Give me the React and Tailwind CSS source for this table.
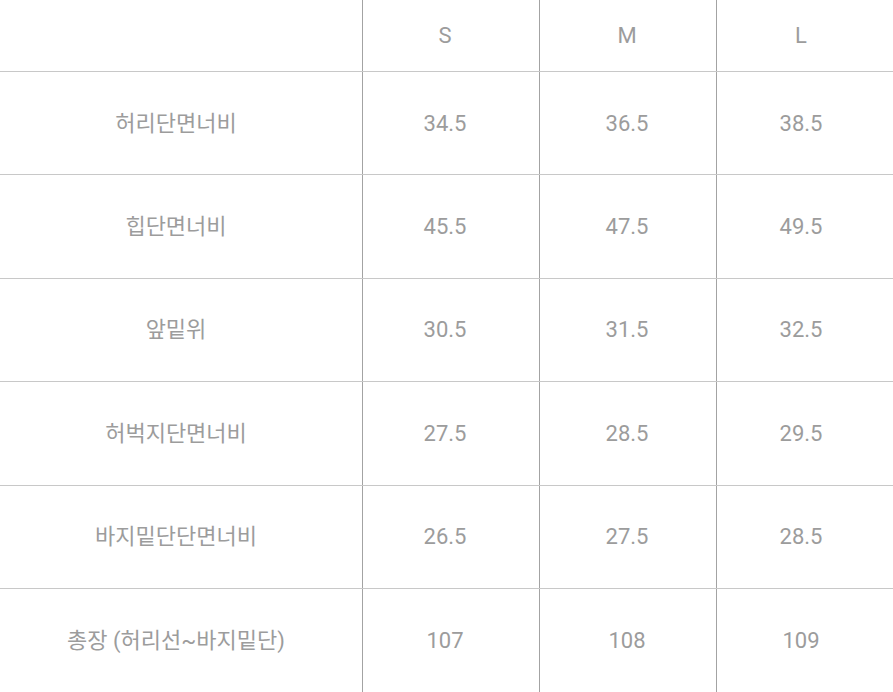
import React from 'react';

const rows = [
  ['허리단면너비', '34.5', '36.5', '38.5'],
  ['힙단면너비', '45.5', '47.5', '49.5'],
  ['앞밑위', '30.5', '31.5', '32.5'],
  ['허벅지단면너비', '27.5', '28.5', '29.5'],
  ['바지밑단단면너비', '26.5', '27.5', '28.5'],
  ['총장 (허리선~바지밑단)', '107', '108', '109'],
];

const cellPad = ['pr-[10px]', 'pr-[12px]', 'pr-[2px]', 'pr-[8px]'];

const Row = ({ cells, header, last }) => (
  <div className={`flex ${last ? '' : 'border-b border-[#c8c8c8]'} ${header ? 'h-[72px]' : 'h-[103.4px]'}`}>
    {cells.map((c, i) => (
      <div
        key={i}
        className={`flex items-center justify-center ${cellPad[i]} ${i === 0 ? 'w-[363px]' : i === 3 ? 'flex-1' : 'w-[177px]'} ${i < 3 ? 'border-r border-[#a3a3a3]' : ''}`}
      >
        {c}
      </div>
    ))}
  </div>
);

export default function App() {
  return (
    <div className="w-[893px] h-[692px] overflow-hidden bg-white text-[#9c9c9c] text-[22px] font-['Roboto','Noto_Sans_CJK_KR',sans-serif]">
      <Row header cells={['', 'S', 'M', 'L']} />
      {rows.map((r, i) => (
        <Row key={i} cells={r} last={i === rows.length - 1} />
      ))}
    </div>
  );
}
